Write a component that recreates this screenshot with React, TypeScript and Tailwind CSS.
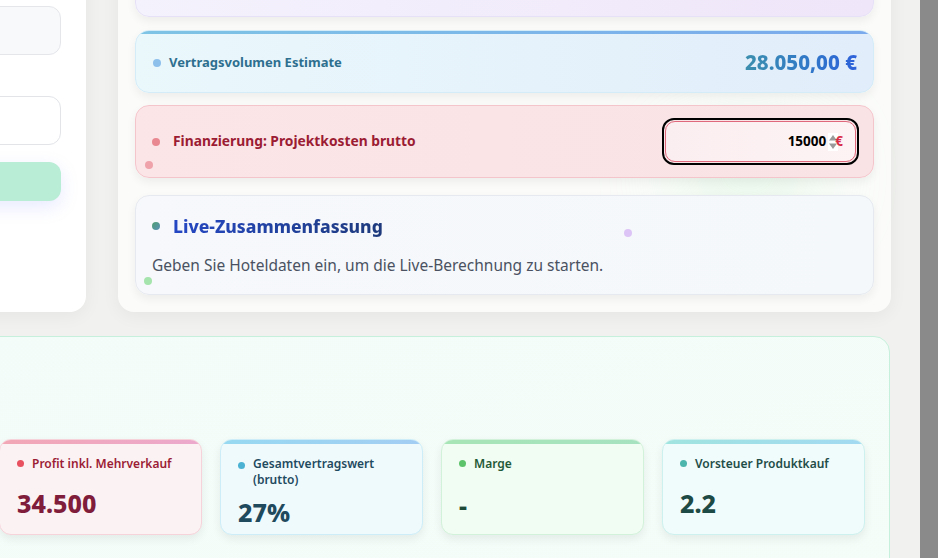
import React from "react";

const stats = [
  {
    label: "Profit inkl. Mehrverkauf",
    value: "34.500",
    card: "bg-[#fbf2f4] border-[#f6d3da]",
    bar: "from-[#f2a7b5] to-[#eca9cc]",
    dot: "bg-[#e8515f]",
    labelColor: "text-[#9b1c35]",
    valueColor: "text-[#7f1d3b]",
    gap: "mt-[15px]",
  },
  {
    label: "Gesamtvertragswert (brutto)",
    value: "27%",
    card: "bg-[#effafd] border-[#cdeef8]",
    bar: "from-[#97d9f1] to-[#a3cdf3]",
    dot: "bg-[#4cb2d3] mt-[6px]",
    labelColor: "text-[#1f4a60]",
    valueColor: "text-[#1f4a5e]",
    gap: "mt-[8px]",
  },
  {
    label: "Marge",
    value: "-",
    card: "bg-[#f1fcf3] border-[#d2f2da]",
    bar: "from-[#a7e5b6] to-[#a7e2c0]",
    dot: "bg-[#5dc36b]",
    labelColor: "text-[#1f5a38]",
    valueColor: "text-[#1d4a36]",
    gap: "mt-[17px]",
  },
  {
    label: "Vorsteuer Produktkauf",
    value: "2.2",
    card: "bg-[#f0fcfc] border-[#cdf1ee]",
    bar: "from-[#a0e4df] to-[#a2d9f2]",
    dot: "bg-[#4db6ac]",
    labelColor: "text-[#1f4d48]",
    valueColor: "text-[#1d4a44]",
    gap: "mt-[15px]",
  },
];

function Dot({ className }: { className: string }) {
  return <span className={`inline-block h-[8px] w-[8px] shrink-0 rounded-full ${className}`} />;
}

export default function App() {
  return (
    <div className="flex h-[558px] w-[938px] overflow-hidden bg-[#f1f2ef] font-['Noto_Sans',sans-serif]">
      <main className="relative w-[920px] shrink-0 overflow-hidden">
        <div className="-ml-[214px] -mt-[60px] w-[1105px]">
          <div className="flex gap-[32px]">
            {/* form column */}
            <section className="flex w-[300px] shrink-0 flex-col rounded-[16px] bg-white px-[25px] pt-[66px] shadow-[0_4px_18px_rgba(0,0,0,0.05)]">
              <div className="h-[49px] rounded-[12px] border border-[#e4e6ea] bg-[#f8f9fb]" />
              <div className="mt-[41px] h-[49px] rounded-[12px] border border-[#e2e4e8] bg-white" />
              <div className="mt-[17px] h-[39px] rounded-[12px] bg-[#b9edd5] shadow-[0_6px_18px_rgba(120,140,255,0.18)]" />
            </section>

            {/* results column */}
            <section className="relative flex w-[773px] shrink-0 flex-col rounded-[16px] bg-[#fbfcfa] p-[17px] shadow-[0_4px_18px_rgba(0,0,0,0.05)]">
              <div className="pointer-events-none absolute left-[560px] top-[200px] h-[70px] w-[140px] rounded-full bg-[#c9efcf] opacity-50 blur-2xl" />

              <div className="relative h-[60px] rounded-[14px] border border-[#e7e1f7] bg-gradient-to-r from-[#f4f2fd] to-[#efe6f9] shadow-[0_4px_10px_rgba(0,0,0,0.06)]" />

              <div className="relative mt-[13px] flex h-[63px] items-center justify-between overflow-hidden rounded-[14px] border border-[#d3ecf8] bg-gradient-to-r from-[#eaf8fc] to-[#e1edfa] pl-[17px] pr-[16px] shadow-[0_4px_10px_rgba(0,0,0,0.06)]">
                <div className="absolute inset-x-0 top-0 h-[3px] bg-gradient-to-r from-[#7ec4e5] to-[#7aa9ec]" />
                <div className="flex items-center gap-[8px] pt-[2px]">
                  <Dot className="bg-[#8ec0ec]" />
                  <span className="text-[13px] font-bold text-[#2e6f8f]">Vertragsvolumen Estimate</span>
                </div>
                <span className="bg-gradient-to-r from-[#3d8fae] to-[#2f62da] bg-clip-text pt-[2px] text-[20.5px] font-extrabold text-transparent">
                  28.050,00 €
                </span>
              </div>

              <div className="relative mt-[12px] flex h-[73px] items-center justify-between rounded-[14px] border border-[#f5c5cc] bg-gradient-to-r from-[#fbe5e7] to-[#f9e3e5] pl-[16px] pr-[14px] shadow-[0_4px_10px_rgba(0,0,0,0.06)]">
                <span className="absolute left-[9px] top-[55px] h-[8px] w-[8px] rounded-full bg-[#efa2aa]" />
                <div className="flex items-center gap-[13px]">
                  <Dot className="bg-[#e98891]" />
                  <span className="text-[13.8px] font-bold text-[#9b1c33]">Finanzierung: Projektkosten brutto</span>
                </div>
                <div className="w-[197px] rounded-[12px] border-2 border-black p-[1px]">
                  <div className="flex h-[41px] items-center justify-end rounded-[10px] border border-[#e0687d] bg-gradient-to-r from-[#fbeef0] to-[#fdf3f4] pr-[12px]">
                    <span className="text-[13.5px] font-bold text-black">15000</span>
                    <span className="relative ml-[2px] flex items-center">
                      <svg width="10" height="18" viewBox="0 0 10 18" className="bg-white">
                        <path d="M5 2 L9 7.5 H1 Z" fill="#9a9a9a" />
                        <path d="M5 16 L9 10.5 H1 Z" fill="#9a9a9a" />
                      </svg>
                      <span className="-ml-[3px] text-[13.5px] font-bold text-[#d92b46]">€</span>
                    </span>
                  </div>
                </div>
              </div>

              <div className="relative mt-[17px] h-[100px] rounded-[14px] border border-[#e6e9ef] bg-gradient-to-r from-[#f6f8fb] to-[#f5f8fb] px-[16px] pt-[17px] shadow-[0_4px_10px_rgba(0,0,0,0.06)]">
                <span className="absolute left-[488px] top-[33px] h-[8px] w-[8px] rounded-full bg-[#dcc4f6]" />
                <span className="absolute left-[8px] top-[81px] h-[8px] w-[8px] rounded-full bg-[#a5e4ac]" />
                <div className="flex items-center gap-[13px]">
                  <Dot className="bg-gradient-to-br from-[#4f9e6e] to-[#5b8fb8]" />
                  <span className="bg-gradient-to-r from-[#2547c4] to-[#1e3a7c] bg-clip-text text-[17.5px] font-extrabold text-transparent">
                    Live-Zusammenfassung
                  </span>
                </div>
                <p className="mt-[15px] text-[15.5px] text-[#4a5262]">
                  Geben Sie Hoteldaten ein, um die Live-Berechnung zu starten.
                </p>
              </div>
            </section>
          </div>

          {/* KPI panel */}
          <section className="mt-[24px] h-[300px] w-[1104px] rounded-[16px] border border-[#c6f0dc] bg-gradient-to-br from-[#f3fcf8] to-[#f5fdf9] pr-[24px] pt-[102px]">
            <div className="flex justify-end gap-[18px]">
              {stats.map((s) => (
                <div
                  key={s.label}
                  className={`relative h-[96px] w-[203px] overflow-hidden rounded-[12px] border px-[17px] pt-[16px] shadow-[0_4px_10px_rgba(0,0,0,0.07)] ${s.card}`}
                >
                  <div className={`absolute inset-x-0 top-0 h-[4px] bg-gradient-to-r ${s.bar}`} />
                  <div className="flex items-start gap-[8px]">
                    <span className={`mt-[4px] h-[7px] w-[7px] shrink-0 rounded-full ${s.dot}`} />
                    <span className={`pr-[2px] text-[12px] font-semibold leading-[16px] ${s.labelColor}`}>{s.label}</span>
                  </div>
                  <div className={`text-[25px] font-extrabold leading-[32px] ${s.valueColor} ${s.gap}`}>{s.value}</div>
                </div>
              ))}
            </div>
          </section>
        </div>
      </main>
      <div className="w-[18px] shrink-0 bg-[#8a8a8a]" />
    </div>
  );
}
